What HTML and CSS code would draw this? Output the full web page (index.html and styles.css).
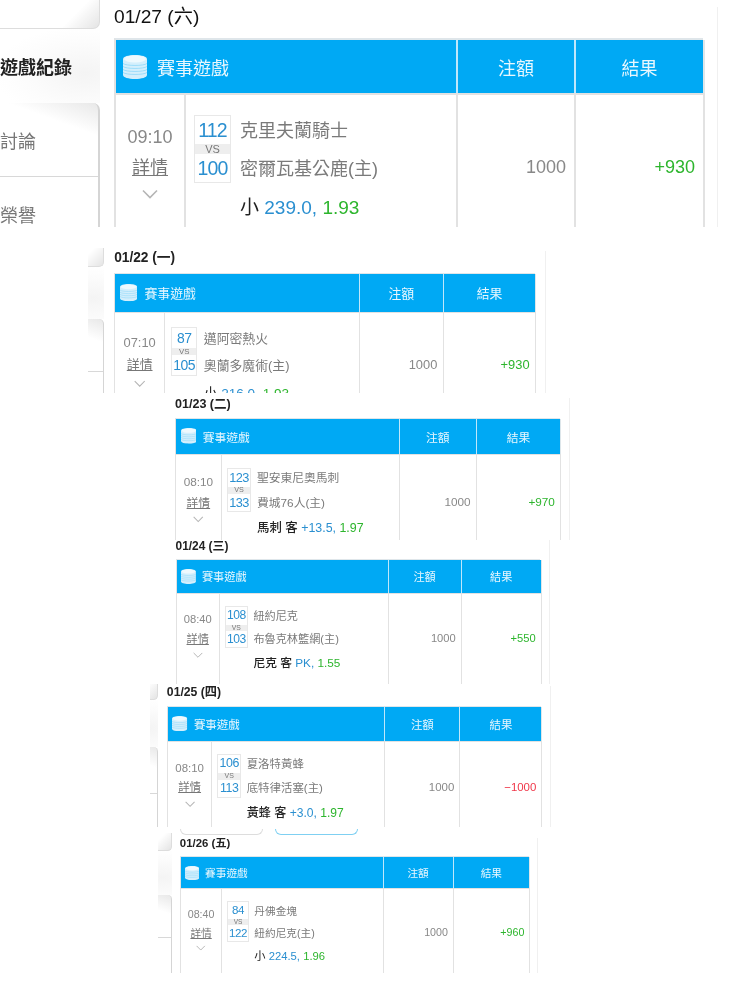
FILE: index.html
```html
<!DOCTYPE html>
<html lang="zh-Hant">
<head>
<meta charset="utf-8">
<title>賽事遊戲紀錄</title>
<link rel="stylesheet" href="styles.css">
</head>
<body>
<svg class="defs" aria-hidden="true">
  <symbol id="stack" viewBox="0 0 24 24">
    <path d="M0 4C0 1.6 5.4 0 12 0s12 1.6 12 4v16c0 2.4-5.4 4-12 4S0 22.400 0 20z" fill="#d4effc"/>
    <ellipse cx="12" cy="4" rx="11" ry="3.400" fill="#eef9fe"/>
    <path d="M0 8.500c3 2.600 21 2.600 24 0M0 11.500c3 2.600 21 2.600 24 0M0 14.500c3 2.600 21 2.600 24 0M0 17.500c3 2.600 21 2.600 24 0" fill="none" stroke="#8fd8fa" stroke-width=".8"/>
  </symbol>
</svg>
<main class="collage">

  <section class="shot shot-a">
    <nav class="side">
      <div class="side-top"></div>
      <div class="side-active"><span>遊戲紀錄</span></div>
      <div class="side-card"><div class="side-row">討論</div><div class="side-row">榮譽</div></div>
    </nav>
    <div class="page">
      <h2 class="date date-plain">01/27 (六)</h2>
      <div class="table">
        <div class="th th-game"><svg class="icon"><use href="#stack"/></svg>賽事遊戲</div>
        <div class="th">注額</div>
        <div class="th th-last">結果</div>
        <div class="td td-time"><span>09:10</span><a class="more">詳情</a><svg class="chev" viewBox="0 0 16 10"><path d="M1 1.500l7 7 7-7" /></svg></div>
        <div class="td td-game">
          <div class="match">
            <div class="score"><b>112</b><i>VS</i><b>100</b></div>
            <div class="teams"><span>克里夫蘭騎士</span><span>密爾瓦基公鹿(主)</span></div>
          </div>
          <p class="odds">小 <em>239.0,</em> <strong>1.93</strong></p>
        </div>
        <div class="td td-num">1000</div>
        <div class="td td-num td-last win">+930</div>
      </div>
    </div>
  </section>

  <section class="shot shot-b">
    <nav class="side">
      <div class="side-top"></div>
      <div class="side-active"><span>遊戲紀錄</span></div>
      <div class="side-card"><div class="side-row">討論</div><div class="side-row">榮譽</div></div>
    </nav>
    <div class="page">
      <h2 class="date">01/22 (一)</h2>
      <div class="table">
        <div class="th th-game"><svg class="icon"><use href="#stack"/></svg>賽事遊戲</div>
        <div class="th">注額</div>
        <div class="th th-last">結果</div>
        <div class="td td-time"><span>07:10</span><a class="more">詳情</a><svg class="chev" viewBox="0 0 16 10"><path d="M1 1.500l7 7 7-7" /></svg></div>
        <div class="td td-game">
          <div class="match">
            <div class="score"><b>87</b><i>VS</i><b>105</b></div>
            <div class="teams"><span>邁阿密熱火</span><span>奧蘭多魔術(主)</span></div>
          </div>
          <p class="odds">小 <em>216.0,</em> <strong>1.93</strong></p>
        </div>
        <div class="td td-num">1000</div>
        <div class="td td-num td-last win">+930</div>
      </div>
    </div>
  </section>

  <section class="shot shot-c">
    <div class="page">
      <h2 class="date">01/23 (二)</h2>
      <div class="table">
        <div class="th th-game"><svg class="icon"><use href="#stack"/></svg>賽事遊戲</div>
        <div class="th">注額</div>
        <div class="th th-last">結果</div>
        <div class="td td-time"><span>08:10</span><a class="more">詳情</a><svg class="chev" viewBox="0 0 16 10"><path d="M1 1.500l7 7 7-7" /></svg></div>
        <div class="td td-game">
          <div class="match">
            <div class="score"><b>123</b><i>VS</i><b>133</b></div>
            <div class="teams"><span>聖安東尼奧馬刺</span><span>費城76人(主)</span></div>
          </div>
          <p class="odds odds-team">馬刺 客 <em>+13.5,</em> <strong>1.97</strong></p>
        </div>
        <div class="td td-num">1000</div>
        <div class="td td-num td-last win">+970</div>
      </div>
    </div>
  </section>

  <section class="shot shot-d">
    <div class="page">
      <h2 class="date">01/24 (三)</h2>
      <div class="table">
        <div class="th th-game"><svg class="icon"><use href="#stack"/></svg>賽事遊戲</div>
        <div class="th">注額</div>
        <div class="th th-last">結果</div>
        <div class="td td-time"><span>08:40</span><a class="more">詳情</a><svg class="chev" viewBox="0 0 16 10"><path d="M1 1.500l7 7 7-7" /></svg></div>
        <div class="td td-game">
          <div class="match">
            <div class="score"><b>108</b><i>VS</i><b>103</b></div>
            <div class="teams"><span>紐約尼克</span><span>布魯克林籃網(主)</span></div>
          </div>
          <p class="odds odds-team">尼克 客 <em>PK,</em> <strong>1.55</strong></p>
        </div>
        <div class="td td-num">1000</div>
        <div class="td td-num td-last win">+550</div>
      </div>
    </div>
  </section>

  <section class="shot shot-e">
    <nav class="side">
      <div class="side-top"></div>
      <div class="side-active"><span>遊戲紀錄</span></div>
      <div class="side-card"><div class="side-row">討論</div><div class="side-row">榮譽</div></div>
    </nav>
    <div class="page">
      <h2 class="date">01/25 (四)</h2>
      <div class="table">
        <div class="th th-game"><svg class="icon"><use href="#stack"/></svg>賽事遊戲</div>
        <div class="th">注額</div>
        <div class="th th-last">結果</div>
        <div class="td td-time"><span>08:10</span><a class="more">詳情</a><svg class="chev" viewBox="0 0 16 10"><path d="M1 1.500l7 7 7-7" /></svg></div>
        <div class="td td-game">
          <div class="match">
            <div class="score"><b>106</b><i>VS</i><b>113</b></div>
            <div class="teams"><span>夏洛特黃蜂</span><span>底特律活塞(主)</span></div>
          </div>
          <p class="odds odds-team">黃蜂 客 <em>+3.0,</em> <strong>1.97</strong></p>
        </div>
        <div class="td td-num">1000</div>
        <div class="td td-num td-last loss">−1000</div>
      </div>
    </div>
  </section>

  <section class="shot shot-f">
    <nav class="side">
      <div class="side-top"></div>
      <div class="side-active"><span>遊戲紀錄</span></div>
      <div class="side-card"><div class="side-row">討論</div><div class="side-row">榮譽</div></div>
    </nav>
    <div class="page">
      <div class="tabs"><span class="tab"></span><span class="tab tab-on"></span></div>
      <h2 class="date">01/26 (五)</h2>
      <div class="table">
        <div class="th th-game"><svg class="icon"><use href="#stack"/></svg>賽事遊戲</div>
        <div class="th">注額</div>
        <div class="th th-last">結果</div>
        <div class="td td-time"><span>08:40</span><a class="more">詳情</a><svg class="chev" viewBox="0 0 16 10"><path d="M1 1.500l7 7 7-7" /></svg></div>
        <div class="td td-game">
          <div class="match">
            <div class="score"><b>84</b><i>VS</i><b>122</b></div>
            <div class="teams"><span>丹佛金塊</span><span>紐約尼克(主)</span></div>
          </div>
          <p class="odds">小 <em>224.5,</em> <strong>1.96</strong></p>
        </div>
        <div class="td td-num">1000</div>
        <div class="td td-num td-last win">+960</div>
      </div>
    </div>
  </section>

</main>
</body>
</html>
```

FILE: styles.css
```css
* { box-sizing: border-box; }
html, body { margin: 0; padding: 0; background: #fff; }
body {
  width: 750px;
  height: 1000px;
  overflow: hidden;
  font-family: "Liberation Sans", "Noto Sans CJK TC", sans-serif;
  color: #777;
}
.defs { display: none; }
.collage { position: relative; width: 750px; height: 1000px; }

/* Each screenshot is a clipped piece on a free canvas. --u is its scale. */
.shot {
  position: absolute;
  display: flex;
  justify-content: flex-end;
  align-items: flex-start;
  overflow: hidden;
  background: #fff;
  filter: blur(.3px);
}
.shot-a { --u: 1px;     --head: 38px; left: 0;     top: 0;     width: 718px; height: 227px; }
.shot-b { --u: .715px;  --head: 25px; left: 88px;  top: 248px; width: 458px; height: 145px; }
.shot-c { --u: .654px;  --head: 25px; left: 174px; top: 393px; width: 396px; height: 147px; }
.shot-d { --u: .62px;   --head: 19px; left: 175px; top: 540px; width: 375px; height: 144px; }
.shot-e { --u: .636px;  --head: 22px; left: 150px; top: 684px; width: 401px; height: 143px; }
.shot-f { --u: .593px;  --head: 29px; left: 158px; top: 827px; width: 380px; height: 146px; }

/* Sidebar pieces */
.side {
  flex: none;
  width: calc(var(--u) * 100);
  margin-top: calc(var(--head) - var(--u) * 38);
  font-size: calc(var(--u) * 18);
}
.side-top {
  height: calc(var(--u) * 29);
  border-bottom: 1px solid #ddd;
  border-right: 1px solid #ddd;
  border-bottom-right-radius: calc(var(--u) * 7);
  background: linear-gradient(135deg, #fff 70%, #e4e4e4 100%);
}
.side-active {
  height: calc(var(--u) * 74);
  display: flex;
  align-items: center;
  font-weight: 700;
  color: #222;
  background: radial-gradient(ellipse at 85% 60%, #f4f4f4 0, #fcfcfc 50%, #fff 75%);
}
.side-card {
  height: calc(var(--u) * 200);
  border-right: calc(var(--u) * 2) solid #d5d5d5;
  border-top-right-radius: calc(var(--u) * 7);
  background: linear-gradient(200deg, #e8e8e8 0, #fff 14%);
}
.side-row {
  height: calc(var(--u) * 74);
  display: flex;
  align-items: center;
  border-bottom: 1px solid #d8d8d8;
}

/* Page column */
.page {
  flex: none;
  width: calc(var(--u) * 618);
  margin-top: calc(var(--head) - var(--u) * 31);
  padding: 0 calc(var(--u) * 14);
  min-height: calc(var(--u) * 500);
  border-right: 1px solid #f0f0f0;
}
.date {
  margin: 0 0 calc(var(--u) * 11);
  height: calc(var(--u) * 20);
  font-size: calc(var(--u) * 19.200);
  line-height: calc(var(--u) * 20);
  font-weight: 700;
  color: #222;
  white-space: nowrap;
}
.date-plain { font-weight: 400; color: #111; }
.tabs {
  display: flex;
  gap: 12px;
  height: 6px;
  margin: -9px 0 3px;
}
.tab {
  width: 83px;
  height: 6px;
  border: 1px solid #ddd;
  border-top: 0;
  border-radius: 0 0 8px 8px;
}
.tab-on { border-color: #7fd0f2; }

/* Table */
.table {
  display: grid;
  grid-template-columns: calc(var(--u) * 70) calc(var(--u) * 272) calc(var(--u) * 118) calc(var(--u) * 129);
  grid-template-rows: calc(var(--u) * 53) calc(var(--u) * 300);
  border-left: calc(var(--u) * 2) solid #e2e2e2;
  border-top: calc(var(--u) * 2) solid #dfe6ea;
}
.th {
  display: flex;
  align-items: center;
  justify-content: center;
  background: #00a9f4;
  color: #e8f7fe;
  font-size: calc(var(--u) * 18);
  border-right: calc(var(--u) * 2) solid #bfe7fb;
}
.th-game {
  grid-column: span 2;
  justify-content: flex-start;
  padding-left: calc(var(--u) * 7);
  gap: calc(var(--u) * 10);
}
.th-last { border-right-color: #dde6ea; }
.icon {
  width: calc(var(--u) * 24);
  height: calc(var(--u) * 24);
}
.td {
  border-top: calc(var(--u) * 2) solid #e2e2e2;
  border-right: calc(var(--u) * 2) solid #e2e2e2;
  font-size: calc(var(--u) * 18);
}
.td-time {
  display: flex;
  flex-direction: column;
  align-items: center;
  gap: calc(var(--u) * 7);
  padding-top: calc(var(--u) * 30);
  line-height: calc(var(--u) * 24);
  color: #888;
}
.more { color: #777; text-decoration: underline; }
.chev {
  width: calc(var(--u) * 16);
  height: calc(var(--u) * 10);
  margin-top: calc(var(--u) * 2);
  fill: none;
  stroke: #b5b5b5;
  stroke-width: 1.6;
}
.td-game { padding: calc(var(--u) * 20) 0 0 calc(var(--u) * 8); }
.match { display: flex; gap: calc(var(--u) * 9); }
.score {
  display: flex;
  flex-direction: column;
  width: calc(var(--u) * 37);
  height: calc(var(--u) * 68);
  border: calc(var(--u) * 1.500) solid #e8e8e8;
  text-align: center;
}
.score b {
  flex: 1;
  font-weight: 400;
  color: #2a8fd0;
  font-size: calc(var(--u) * 19.500);
  line-height: calc(var(--u) * 28);
  letter-spacing: -.04em;
}
.score i {
  height: calc(var(--u) * 10);
  background: #eee;
  color: #777;
  font-style: normal;
  font-size: calc(var(--u) * 11);
  line-height: calc(var(--u) * 10);
}
.teams {
  display: flex;
  flex-direction: column;
  gap: calc(var(--u) * 14);
  padding-top: calc(var(--u) * 4);
  line-height: calc(var(--u) * 24);
  color: #7a7a7a;
}
.odds {
  margin: calc(var(--u) * 13) 0 0 calc(var(--u) * 46);
  line-height: calc(var(--u) * 24);
  font-size: calc(var(--u) * 19);
  color: #222;
  white-space: nowrap;
}
.odds-team { font-weight: 500; }
.odds em { font-style: normal; color: #2a8fd0; font-weight: 400; }
.odds strong { font-weight: 400; color: #2db52d; }
.td-num {
  padding: calc(var(--u) * 60) calc(var(--u) * 8) 0 0;
  line-height: calc(var(--u) * 24);
  text-align: right;
  color: #888;
}
.td-last { border-right-color: #e2e2e2; }
.win { color: #2db52d; }
.loss { color: #f0384a; }
```
